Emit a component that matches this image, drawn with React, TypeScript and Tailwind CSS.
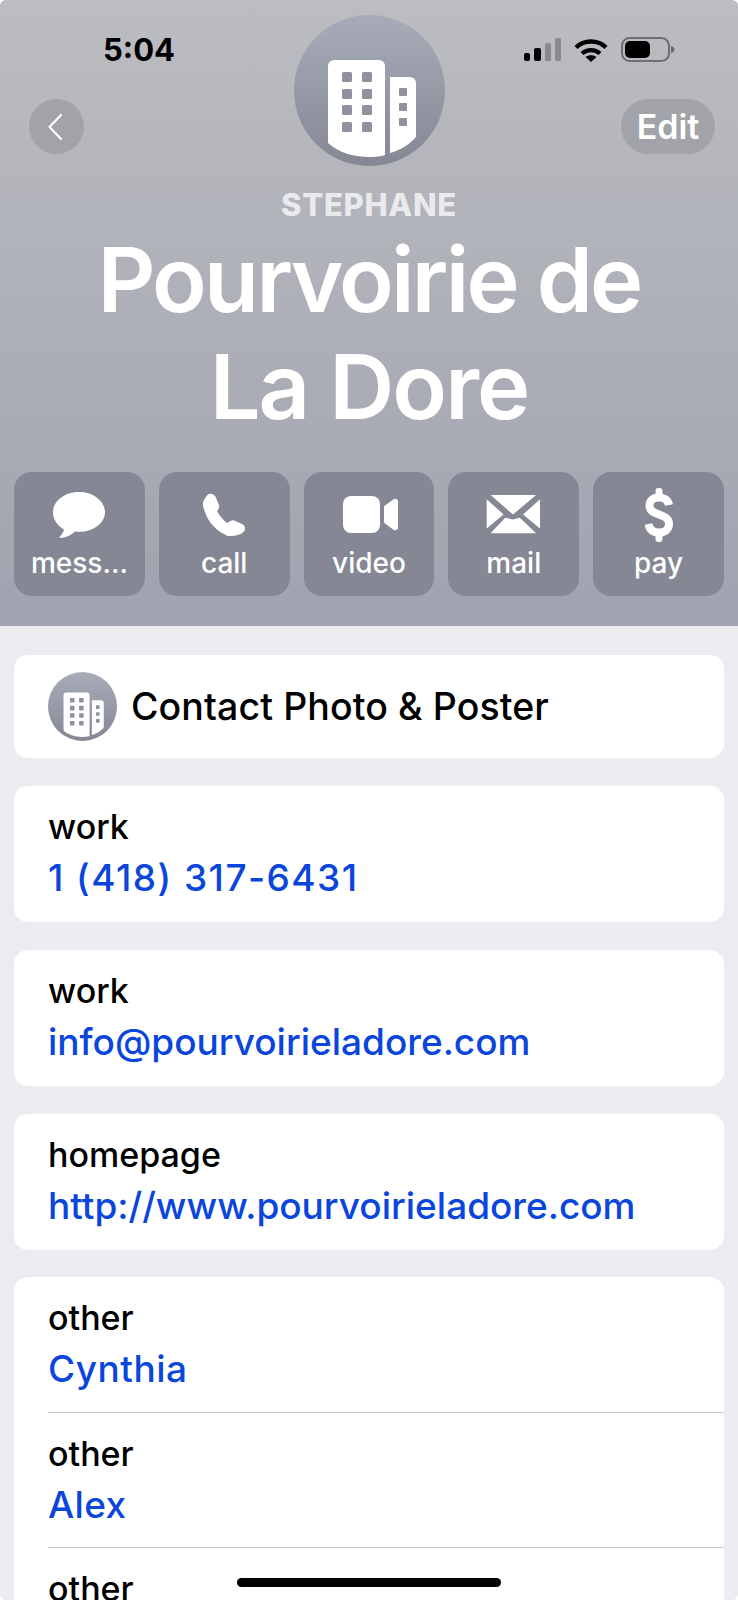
import React from "react";

function Building({ className }: { className?: string }) {
  return (
    <svg viewBox="0 0 151 151" className={className}>
      <path
        fill="#fff"
        d="M34 51a6 6 0 0 1 6-6h45a6 6 0 0 1 6 6v89c-4 1.500-10 2-16 2-16 0-31-5-41-14z"
      />
      <g fill="#8f929e">
        <rect x="48" y="57" width="10" height="10" rx="1.500" />
        <rect x="68" y="57" width="10" height="10" rx="1.500" />
        <rect x="48" y="74" width="10" height="10" rx="1.500" />
        <rect x="68" y="74" width="10" height="10" rx="1.500" />
        <rect x="48" y="90" width="10" height="10" rx="1.500" />
        <rect x="68" y="90" width="10" height="10" rx="1.500" />
        <rect x="48" y="107" width="10" height="10" rx="1.500" />
        <rect x="68" y="107" width="10" height="10" rx="1.500" />
      </g>
      <path fill="#fff" d="M96 62h20a6 6 0 0 1 6 6v54c-6 7-15 13-26 16z" />
      <g fill="#8f929e">
        <rect x="105" y="73" width="8" height="8" rx="1" />
        <rect x="105" y="88" width="8" height="8" rx="1" />
        <rect x="105" y="103" width="8" height="8" rx="1" />
      </g>
    </svg>
  );
}

function Avatar({ size }: { size: string }) {
  return (
    <div className={`${size} shrink-0 rounded-full overflow-hidden bg-gradient-to-b from-[#a8acb9] to-[#858894]`}>
      <Building className="w-full h-full" />
    </div>
  );
}

function Action({ label, children }: { label: string; children: React.ReactNode }) {
  return (
    <div className="flex-1 h-[124px] rounded-[18px] bg-[#858795] flex flex-col items-center text-white">
      <div className="h-[74px] w-full flex items-center justify-center pt-[11px]">{children}</div>
      <div className="text-[28px] leading-[34px] font-medium">{label}</div>
    </div>
  );
}

function Field({
  label,
  value,
  divider,
  valueClass,
  rowClass,
}: {
  label: string;
  value?: string;
  divider?: boolean;
  valueClass?: string;
  rowClass?: string;
}) {
  return (
    <div className={`${rowClass ?? "h-[135px]"} flex flex-col justify-start pt-[18px] ${divider ? "border-b border-[#c6c6c8]" : ""}`}>
      <div className="text-[34px] leading-[46px] font-medium text-black">{label}</div>
      {value ? (
        <div className={`text-[37px] leading-[54px] font-medium text-[#0a45dc] mt-[1px] ${valueClass ?? ""}`}>{value}</div>
      ) : null}
    </div>
  );
}

export default function App() {
  return (
    <div className="w-[738px] h-[1600px] bg-white">
      <div
        className="relative w-[738px] h-[1600px] overflow-hidden bg-[#ebebf0] rounded-[6px]"
        style={{ fontFamily: "Inter, 'Liberation Sans', sans-serif" }}
      >
        <header className="relative h-[626px] bg-gradient-to-b from-[#bcbdc1] to-[#a0a2af] flex flex-col items-center pt-[15px]">
          <div className="absolute left-[103px] top-[32px] text-[31px] leading-[36px] font-bold text-black">5:04</div>
          <div className="absolute left-[524px] top-[37px] flex items-center gap-[13px]">
            <svg viewBox="0 0 37 23" className="w-[37px] h-[23px]">
              <rect x="0" y="15" width="6" height="8" rx="2" fill="#000" />
              <rect x="10" y="10" width="7" height="13" rx="2" fill="#000" />
              <rect x="21" y="5" width="6" height="18" rx="1.500" fill="#8a8a8e" />
              <rect x="31" y="0" width="6" height="23" rx="1.500" fill="#8a8a8e" />
            </svg>
            <svg viewBox="0 0 34 24" className="w-[34px] h-[24px]">
              <path fill="none" stroke="#000" strokeWidth="4.400" d="M2 9.500C10 1.500 24 1.500 32 9.500" />
              <path fill="none" stroke="#000" strokeWidth="4.200" d="M8 15.500c5-4.500 13-4.500 18 0" />
              <path fill="#000" d="M11.500 19c3-2.500 8-2.500 11 0L17 24z" />
            </svg>
            <svg viewBox="0 0 54 25" className="w-[54px] h-[25px]">
              <rect x="1" y="1" width="47" height="23" rx="7.500" fill="none" stroke="#6d6e72" strokeWidth="2" />
              <rect x="4" y="4" width="25" height="17" rx="5" fill="#000" />
              <path d="M50 9c2.500.5 3.500 2 3.500 3.500S52.500 15.500 50 16z" fill="#6d6e72" />
            </svg>
          </div>

          <div className="absolute left-[29px] top-[99px] w-[55px] h-[55px] rounded-full bg-[#a2a3a9] flex items-center justify-center">
            <svg viewBox="0 0 16 28" className="w-[16px] h-[28px] mr-[3px]">
              <path d="M14 2 2.500 14 14 26" fill="none" stroke="#fff" strokeWidth="2.200" strokeLinecap="round" strokeLinejoin="round" />
            </svg>
          </div>
          <div className="absolute left-[621px] top-[99px] w-[94px] h-[55px] rounded-full bg-[#a2a3a9] flex items-center justify-center text-white text-[34px] leading-[57px] font-semibold">
            Edit
          </div>

          <Avatar size="w-[151px] h-[151px]" />
          <div className="mt-[21px] text-[31px] leading-[36px] font-extrabold tracking-[0.7px] text-[#e9eaec]">STEPHANE</div>
          <div className="mt-[3px] text-[90px] leading-[107px] font-semibold text-white text-center">
            <div className="tracking-[-2.800px]">Pourvoirie de</div>
            <div className="tracking-[-1.900px]">La Dore</div>
          </div>

          <div className="absolute left-[14px] right-[14px] top-[472px] flex gap-[14px]">
            <Action label="mess...">
              <svg viewBox="0 0 52 46" className="w-[52px] h-[46px]">
                <path fill="#fff" d="M26 0C11.600 0 0 9 0 20.500c0 7 4.500 13.200 11 17-.7 2.800-2.300 5.400-4.300 7.200-.6.600-.2 1.300.6 1.300 5.500 0 11-3 14.700-6.500 1.300.2 2.700.3 4 .3 14.400 0 26-9 26-19.300C52 9 40.400 0 26 0z" />
              </svg>
            </Action>
            <Action label="call">
              <svg viewBox="0 0 42 43" className="w-[42px] h-[43px]">
                <path fill="#fff" d="M2.300 5C3.500 2.500 5.500.7 7.300.7 9.500.7 11 1.700 12.300 3.300L16 12c.8 2-.5 4.500-2 6.300C16.500 22.500 20 27 24 30c2-1 4.500-3 6.700-2.700l9.300 4.200c1.500 1 2.300 3 2 5.200-1 2.300-3.500 4.300-6.300 5-3.700 1.300-8.200 1.800-11.700 1-5-2.200-9.500-5.200-13.300-9.400C6.500 29 3.500 24 2.300 20 .5 15.500-.3 12.500 0 10c.2-2 1.200-3.500 2.300-5z" />
              </svg>
            </Action>
            <Action label="video">
              <svg viewBox="0 0 55 37" className="w-[55px] h-[37px] ml-[3px]">
                <rect x="0" y="0" width="37" height="37" rx="8" fill="#fff" />
                <path fill="#fff" d="M41 12c0-1 .4-1.800 1-2.400l8.500-6.400C52.500 2 55 3 55 5.500v26c0 2.500-2.500 3.500-4.500 2.300L42 27.400c-.6-.6-1-1.400-1-2.400z" />
              </svg>
            </Action>
            <Action label="mail">
              <svg viewBox="0 0 55 40" className="w-[55px] h-[39px]">
                <path fill="#fff" d="M4 0h46.700L27 20z" />
                <path fill="#fff" d="M0 4.300 17.300 20 0 34.300zM54.700 4.300 37.300 20l17.400 14.300zM4 39.300 19 23.300l7.700 1.700L34 23.300l16.700 16z" />
              </svg>
            </Action>
            <Action label="pay">
              <svg viewBox="0 0 28 54" className="w-[28px] h-[54px]">
                <rect x="10.500" y="0" width="7" height="11" rx="3" fill="#fff" />
                <rect x="10.500" y="43" width="7" height="11" rx="3" fill="#fff" />
                <path fill="none" stroke="#fff" strokeWidth="8" d="M24 17c-1-5-5-7.500-10-7.500C8 9.500 4.500 13 4.500 17.500 4.500 29 24 24 24 36c0 5-4 8.500-10 8.500S4.500 41.500 3.500 36" />
              </svg>
            </Action>
          </div>
        </header>

        <main className="px-[14px] pt-[29px] flex flex-col">
          <section className="h-[103px] rounded-[14px] bg-white flex items-center pl-[34px] gap-[14px]">
            <Avatar size="w-[69px] h-[69px]" />
            <span className="text-[37.500px] font-medium text-black pt-[2px] tracking-[0.1px]">Contact Photo &amp; Poster</span>
          </section>
          <section className="mt-[28px] h-[136px] rounded-[14px] bg-white pl-[34px]">
            <Field label="work" value="1 (418) 317-6431" valueClass="tracking-[1.450px]" />
          </section>
          <section className="mt-[28px] h-[136px] rounded-[14px] bg-white pl-[34px]">
            <Field label="work" value="info@pourvoirieladore.com" />
          </section>
          <section className="mt-[28px] h-[136px] rounded-[14px] bg-white pl-[34px]">
            <Field label="homepage" value="http://www.pourvoirieladore.com" />
          </section>
          <section className="mt-[27px] rounded-t-[14px] bg-white pl-[34px] h-[400px]">
            <Field label="other" value="Cynthia" divider rowClass="h-[136px]" valueClass="tracking-[0.5px]" />
            <Field label="other" value="Alex" divider valueClass="tracking-[0.3px]" />
            <Field label="other" />
          </section>
        </main>

        <div className="absolute left-[237px] top-[1578px] w-[264px] h-[9px] rounded-full bg-black" />
      </div>
    </div>
  );
}
